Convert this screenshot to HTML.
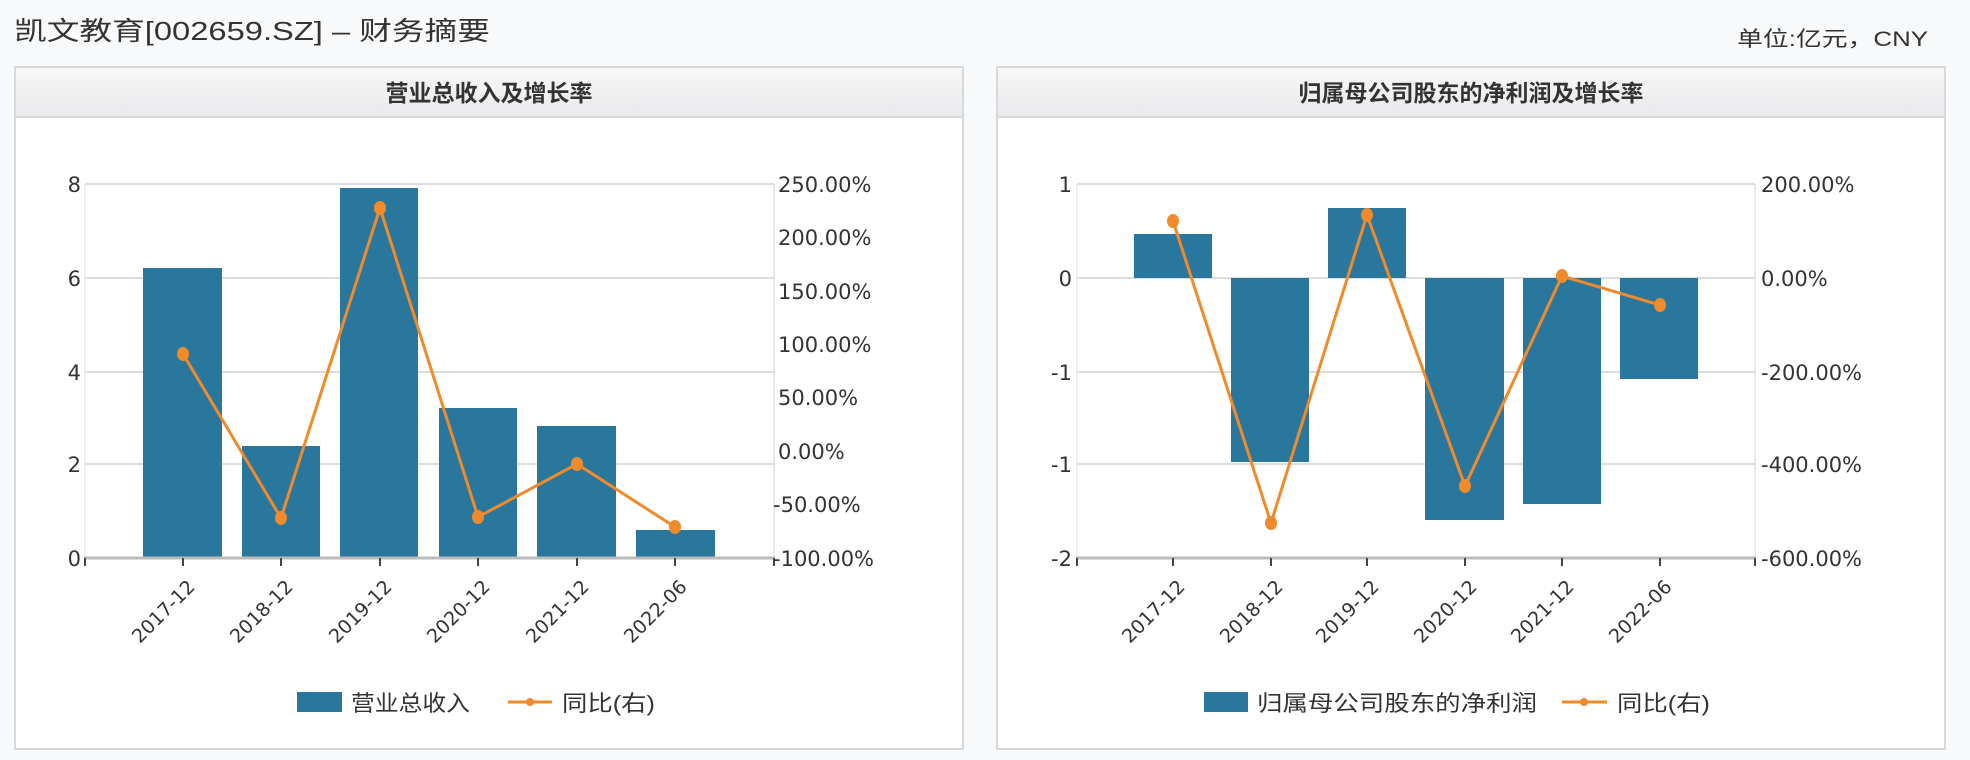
<!DOCTYPE html>
<html><head><meta charset="utf-8"><style>
html,body{margin:0;padding:0;background:#f8f9fb;width:1970px;height:760px;overflow:hidden}
svg{display:block}
text{font-family:"DejaVu Sans","Noto Sans CJK SC",sans-serif;fill:#333}
.cjk{font-family:"Liberation Sans","Noto Sans CJK SC",sans-serif}
.ax{font-size:21px}
.xl{font-size:19px}
.lg{font-size:22px}
</style></head><body>
<svg width="1970" height="760" viewBox="0 0 1970 760" xmlns="http://www.w3.org/2000/svg">
<defs><linearGradient id="hg" x1="0" y1="0" x2="0" y2="1"><stop offset="0" stop-color="#fafafa"/><stop offset="0.15" stop-color="#f5f5f5"/><stop offset="1" stop-color="#e8e9eb"/></linearGradient></defs>
<text class="cjk" x="14" y="40" font-size="26" textLength="476" lengthAdjust="spacingAndGlyphs">凯文教育[002659.SZ] – 财务摘要</text>
<text class="cjk" x="1737" y="46" font-size="21" textLength="191" lengthAdjust="spacingAndGlyphs">单位:亿元，CNY</text>

<!-- Left panel -->
<rect x="15" y="67" width="948" height="682" fill="#fff" stroke="#d7d8da" stroke-width="2"/>
<rect x="16" y="68" width="946" height="49" fill="url(#hg)"/>
<line x1="16" y1="117" x2="962" y2="117" stroke="#d7d8da" stroke-width="2"/>
<text class="cjk" x="489" y="101" font-size="23" font-weight="bold" text-anchor="middle">营业总收入及增长率</text>
<g stroke="#dcdcdc" stroke-width="2">
<line x1="85" y1="184" x2="774" y2="184"/><line x1="85" y1="278" x2="774" y2="278"/><line x1="85" y1="372" x2="774" y2="372"/><line x1="85" y1="464" x2="774" y2="464"/>
</g>
<line x1="85" y1="184" x2="85" y2="558" stroke="#e0e0e0" stroke-width="1"/>
<line x1="774" y1="184" x2="774" y2="558" stroke="#d5d5d5" stroke-width="1"/>
<g fill="#2a779e">
<rect x="143" y="268" width="79" height="290"/><rect x="242" y="446" width="78" height="112"/><rect x="340" y="188" width="78" height="370"/><rect x="439" y="408" width="78" height="150"/><rect x="537" y="426" width="79" height="132"/><rect x="636" y="530" width="79" height="28"/>
</g>
<line x1="84" y1="558" x2="775" y2="558" stroke="#bbb" stroke-width="3"/>
<g stroke="#444" stroke-width="2"><line x1="85" y1="558" x2="85" y2="566"/><line x1="183" y1="558" x2="183" y2="566"/><line x1="281" y1="558" x2="281" y2="566"/><line x1="380" y1="558" x2="380" y2="566"/><line x1="478" y1="558" x2="478" y2="566"/><line x1="577" y1="558" x2="577" y2="566"/><line x1="675" y1="558" x2="675" y2="566"/><line x1="774" y1="558" x2="774" y2="566"/></g>
<polyline points="183,354 281,518 380,208 478,517 577,464 675,527" fill="none" stroke="#f08a2a" stroke-width="3"/>
<g fill="#f08a2a"><ellipse cx="183" cy="354" rx="6" ry="7"/><ellipse cx="281" cy="518" rx="6" ry="7"/><ellipse cx="380" cy="208" rx="6" ry="7"/><ellipse cx="478" cy="517" rx="6" ry="7"/><ellipse cx="577" cy="464" rx="6" ry="7"/><ellipse cx="675" cy="527" rx="6" ry="7"/></g>
<g class="ax" text-anchor="end"><text x="81" y="192">8</text><text x="81" y="286">6</text><text x="81" y="380">4</text><text x="81" y="472">2</text><text x="81" y="566">0</text></g>
<g class="ax"><text x="778" y="192">250.00%</text><text x="778" y="245">200.00%</text><text x="778" y="299">150.00%</text><text x="778" y="352">100.00%</text><text x="778" y="405">50.00%</text><text x="778" y="459">0.00%</text><text x="773" y="512">-50.00%</text><text x="773" y="566">-100.00%</text></g>
<g class="xl" text-anchor="end">
<text transform="translate(196,588) rotate(-45)">2017-12</text><text transform="translate(294,588) rotate(-45)">2018-12</text><text transform="translate(393,588) rotate(-45)">2019-12</text><text transform="translate(491,588) rotate(-45)">2020-12</text><text transform="translate(590,588) rotate(-45)">2021-12</text><text transform="translate(688,588) rotate(-45)">2022-06</text>
</g>
<rect x="297" y="692" width="45" height="20" fill="#2a779e"/>
<text class="cjk lg" x="351" y="711" textLength="119" lengthAdjust="spacingAndGlyphs">营业总收入</text>
<line x1="508" y1="702" x2="552" y2="702" stroke="#f08a2a" stroke-width="3"/><circle cx="530" cy="702" r="4" fill="#f08a2a"/>
<text class="cjk lg" x="562" y="711" textLength="93" lengthAdjust="spacingAndGlyphs">同比(右)</text>

<!-- Right panel -->
<rect x="997" y="67" width="948" height="682" fill="#fff" stroke="#d7d8da" stroke-width="2"/>
<rect x="998" y="68" width="946" height="49" fill="url(#hg)"/>
<line x1="998" y1="117" x2="1944" y2="117" stroke="#d7d8da" stroke-width="2"/>
<text class="cjk" x="1471" y="101" font-size="23" font-weight="bold" text-anchor="middle">归属母公司股东的净利润及增长率</text>
<g stroke="#dcdcdc" stroke-width="2">
<line x1="1077" y1="184" x2="1755" y2="184"/><line x1="1077" y1="278" x2="1755" y2="278"/><line x1="1077" y1="372" x2="1755" y2="372"/><line x1="1077" y1="464" x2="1755" y2="464"/>
</g>
<line x1="1077" y1="184" x2="1077" y2="558" stroke="#e0e0e0" stroke-width="1"/>
<line x1="1755" y1="184" x2="1755" y2="558" stroke="#d5d5d5" stroke-width="1"/>
<g fill="#2a779e">
<rect x="1134" y="234" width="78" height="44"/><rect x="1231" y="278" width="78" height="184"/><rect x="1328" y="208" width="78" height="70"/><rect x="1425" y="278" width="79" height="242"/><rect x="1523" y="278" width="78" height="226"/><rect x="1620" y="278" width="78" height="101"/>
</g>
<line x1="1076" y1="558" x2="1756" y2="558" stroke="#bbb" stroke-width="3"/>
<g stroke="#444" stroke-width="2"><line x1="1077" y1="558" x2="1077" y2="566"/><line x1="1173" y1="558" x2="1173" y2="566"/><line x1="1271" y1="558" x2="1271" y2="566"/><line x1="1367" y1="558" x2="1367" y2="566"/><line x1="1465" y1="558" x2="1465" y2="566"/><line x1="1562" y1="558" x2="1562" y2="566"/><line x1="1660" y1="558" x2="1660" y2="566"/><line x1="1755" y1="558" x2="1755" y2="566"/></g>
<polyline points="1173,221 1271,523 1367,215 1465,486 1562,276 1660,305" fill="none" stroke="#f08a2a" stroke-width="3"/>
<g fill="#f08a2a"><ellipse cx="1173" cy="221" rx="6" ry="7"/><ellipse cx="1271" cy="523" rx="6" ry="7"/><ellipse cx="1367" cy="215" rx="6" ry="7"/><ellipse cx="1465" cy="486" rx="6" ry="7"/><ellipse cx="1562" cy="276" rx="6" ry="7"/><ellipse cx="1660" cy="305" rx="6" ry="7"/></g>
<g class="ax" text-anchor="end"><text x="1072" y="192">1</text><text x="1072" y="286">0</text><text x="1072" y="380">-1</text><text x="1072" y="472">-1</text><text x="1072" y="566">-2</text></g>
<g class="ax"><text x="1761" y="192">200.00%</text><text x="1761" y="286">0.00%</text><text x="1761" y="380">-200.00%</text><text x="1761" y="472">-400.00%</text><text x="1761" y="566">-600.00%</text></g>
<g class="xl" text-anchor="end">
<text transform="translate(1186,588) rotate(-45)">2017-12</text><text transform="translate(1284,588) rotate(-45)">2018-12</text><text transform="translate(1380,588) rotate(-45)">2019-12</text><text transform="translate(1478,588) rotate(-45)">2020-12</text><text transform="translate(1575,588) rotate(-45)">2021-12</text><text transform="translate(1673,588) rotate(-45)">2022-06</text>
</g>
<rect x="1204" y="692" width="44" height="20" fill="#2a779e"/>
<text class="cjk lg" x="1257" y="711" textLength="280" lengthAdjust="spacingAndGlyphs">归属母公司股东的净利润</text>
<line x1="1562" y1="702" x2="1607" y2="702" stroke="#f08a2a" stroke-width="3"/><circle cx="1584" cy="702" r="4" fill="#f08a2a"/>
<text class="cjk lg" x="1617" y="711" textLength="93" lengthAdjust="spacingAndGlyphs">同比(右)</text>
</svg>
</body></html>
